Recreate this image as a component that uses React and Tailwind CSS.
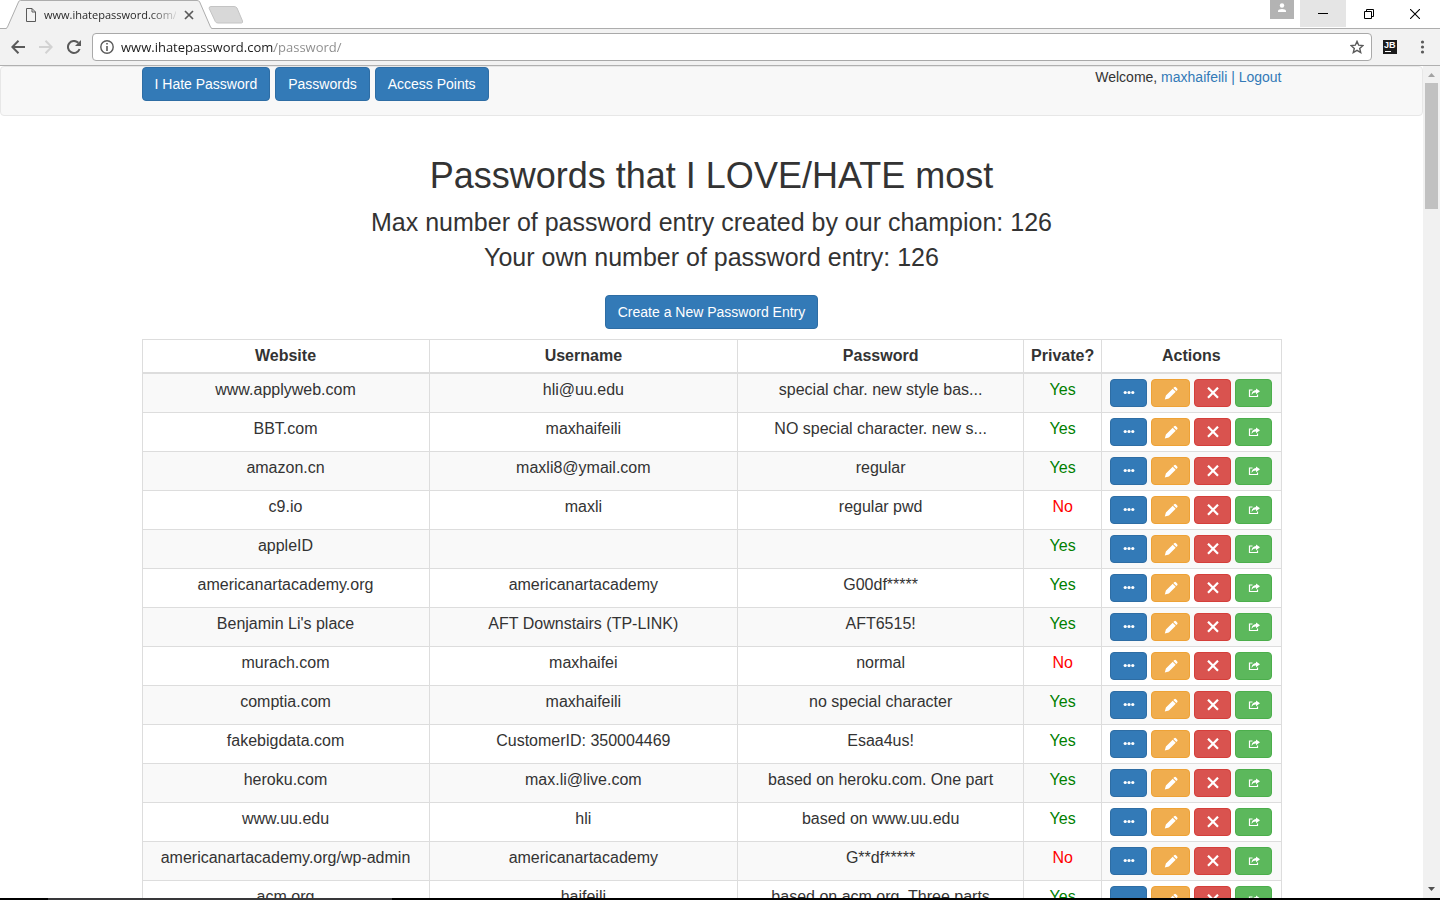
const rows = [
  ["www.applyweb.com", "hli@uu.edu", "special char. new style bas...", true],
  ["BBT.com", "maxhaifeili", "NO special character. new s...", true],
  ["amazon.cn", "maxli8@ymail.com", "regular", true],
  ["c9.io", "maxli", "regular pwd", false],
  ["appleID", "", "", true],
  ["americanartacademy.org", "americanartacademy", "G00df*****", true],
  ["Benjamin Li's place", "AFT Downstairs (TP-LINK)", "AFT6515!", true],
  ["murach.com", "maxhaifei", "normal", false],
  ["comptia.com", "maxhaifeili", "no special character", true],
  ["fakebigdata.com", "CustomerID: 350004469", "Esaa4us!", true],
  ["heroku.com", "max.li@live.com", "based on heroku.com. One part", true],
  ["www.uu.edu", "hli", "based on www.uu.edu", true],
  ["americanartacademy.org/wp-admin", "americanartacademy", "G**df*****", false],
  ["acm.org", "haifeili", "based on acm.org. Three parts", true],
];

function BrowserTab() {
  return (
    <div className="relative flex h-7 w-[206px] items-center pl-5 pr-4">
      <svg className="absolute inset-0 h-[29px] w-full" viewBox="0 0 206 29" aria-hidden="true">
        <path d="M0 29 L1.500 27 L12.500 2 Q13 .5 14.500 .5 H191 Q193 .5 193.700 2 L204.500 27 L206 29 Z" fill="#f2f2f2" />
        <path d="M0 28.500 Q1 28 1.500 27 L12.500 2 Q13 .5 14.500 .5 H191 Q193 .5 193.700 2 L204.500 27 Q205 28 206 28.500" fill="none" stroke="#adadad" />
      </svg>
      <svg className="relative mt-0.5 h-3.5 w-2.5" viewBox="0 0 10 14" fill="none" stroke="#5a5a5a" aria-hidden="true">
        <path d="M.5 .5 H6 L9.500 4 V13.500 H.5 Z M6 .5 V4 H9.500" />
      </svg>
      <span className="relative ml-2 mt-0.5 w-[132px] whitespace-nowrap bg-linear-to-r from-[#222] from-80% to-[#2222] bg-clip-text font-['Open_Sans',sans-serif] text-[11px]/4 text-transparent">
        www.ihatepassword.com/
      </span>
      <button aria-label="Close tab" className="relative ml-2 mt-0.5 shrink-0">
        <svg className="h-2.5 w-2.5" viewBox="0 0 10 10" stroke="#5a5a5a" strokeWidth="1.700" aria-hidden="true">
          <path d="M1 1 L9 9 M9 1 L1 9" />
        </svg>
      </button>
    </div>
  );
}

function TitleBar() {
  return (
    <header className="flex h-[29px] shrink-0 items-start border-b border-[#adadad] bg-white pl-1.5 pr-0.5">
      <BrowserTab />
      <button aria-label="New tab" className="-ml-1 mt-1.5">
        <svg className="h-[18px] w-[36px]" viewBox="0 0 36 18" aria-hidden="true">
          <path d="M3 .5 H26 Q28 .5 29 2 L34.500 15 Q35 17 33.500 17 H10 Q8 17 7.300 15.500 L1.200 2.500 Q.8 .5 3 .5 Z" fill="#d8d8d8" stroke="#c4c4c4" />
        </svg>
      </button>
      <div className="ml-auto flex items-start">
        <button aria-label="Profile" className="mr-1.5 flex h-[19px] w-6 items-center justify-center bg-[#b3b3b3]">
          <svg className="mb-1 h-2.5 w-2.5" viewBox="0 0 10 10" fill="#fff" aria-hidden="true">
            <circle cx="5" cy="2.500" r="2.200" />
            <path d="M1 9 V7.800 Q1.500 6 5 6 Q8.500 6 9 7.800 V9 Z" />
          </svg>
        </button>
        <button aria-label="Minimize" className="flex h-[27px] w-[46px] items-center justify-center bg-[#e5e5e5]">
          <svg className="h-2.5 w-2.5" viewBox="0 0 10 10" aria-hidden="true"><path d="M0 4.500 H10" stroke="#000" /></svg>
        </button>
        <button aria-label="Restore" className="flex h-[27px] w-[46px] items-center justify-center">
          <svg className="h-2.5 w-2.5" viewBox="0 0 10 10" fill="none" stroke="#000" aria-hidden="true">
            <path d="M.5 2.500 H7.500 V9.500 H.5 Z M2.500 2.500 V.5 H9.500 V7.500 H7.500" />
          </svg>
        </button>
        <button aria-label="Close" className="flex h-[27px] w-[46px] items-center justify-center">
          <svg className="h-2.5 w-2.5" viewBox="0 0 10 10" stroke="#000" strokeWidth="1.100" aria-hidden="true">
            <path d="M0 0 L10 10 M10 0 L0 10" />
          </svg>
        </button>
      </div>
    </header>
  );
}

function Toolbar() {
  return (
    <div className="flex h-[37px] shrink-0 items-center border-b border-[#b0b0b0] bg-[#f2f2f2] pl-[11px] pr-[9px]">
      <button aria-label="Back">
        <svg className="h-3.5 w-3.5" viewBox="0 0 14 14" fill="none" stroke="#5a5a5a" strokeWidth="2" aria-hidden="true">
          <path d="M14 7 H1.500 M7.500 .8 L1.300 7 L7.500 13.200" />
        </svg>
      </button>
      <button aria-label="Forward" className="ml-3.5">
        <svg className="h-3.5 w-3.5" viewBox="0 0 14 14" fill="none" stroke="#d2d2d2" strokeWidth="2" aria-hidden="true">
          <path d="M0 7 H12.500 M6.500 .8 L12.700 7 L6.500 13.200" />
        </svg>
      </button>
      <button aria-label="Reload" className="ml-3.5">
        <svg className="h-3.5 w-3.5" viewBox="0 0 14 14" aria-hidden="true">
          <path d="M12.600 9 A6 6 0 1 1 11.300 2.800" fill="none" stroke="#5a5a5a" strokeWidth="2" />
          <path d="M14 0 V6 H8 Z" fill="#5a5a5a" />
        </svg>
      </button>
      <div className="ml-[11px] flex h-7 flex-1 items-center rounded-sm border border-[#a9a9a9] bg-white pl-[7px] pr-[7px]">
        <svg className="h-3.5 w-3.5" viewBox="0 0 14 14" aria-hidden="true">
          <circle cx="7" cy="7" r="6.200" fill="none" stroke="#5a5a5a" strokeWidth="1.400" />
          <path d="M6.200 3 H7.800 V4.600 H6.200 Z M6.200 6 H7.800 V11 H6.200 Z" fill="#5a5a5a" />
        </svg>
        <input
          aria-label="Address"
          defaultValue="www.ihatepassword.com/password/"
          className="ml-[7px] min-w-0 flex-1 bg-linear-to-r from-[#1a1a1a] from-[153px] to-[#8a8a8a] to-[153px] bg-clip-text font-['Open_Sans',sans-serif] text-[13px]/5 text-transparent caret-black outline-none"
        />
        <button aria-label="Bookmark">
          <svg className="h-3.5 w-3.5" viewBox="0 0 14 14" fill="none" stroke="#5a5a5a" strokeWidth="1.400" aria-hidden="true">
            <path d="M7 1.400 L8.700 5.200 L12.900 5.600 L9.700 8.400 L10.700 12.500 L7 10.300 L3.300 12.500 L4.300 8.400 L1.100 5.600 L5.300 5.200 Z" />
          </svg>
        </button>
      </div>
      <button aria-label="JetBrains extension" className="ml-[11px] flex h-3.5 w-3.5 flex-col items-start bg-[#1c1c1c] px-px pt-px text-white">
        <span className="font-['Liberation_Sans',sans-serif] text-[9px]/[8px] font-bold">JB</span>
        <span className="ml-px mt-0.5 h-px w-1.5 bg-white" />
      </button>
      <button aria-label="Menu" className="ml-[18px]">
        <svg className="h-3.5 w-4" viewBox="0 0 16 14" fill="#5a5a5a" aria-hidden="true">
          <circle cx="7.500" cy="2" r="1.600" /><circle cx="7.500" cy="7" r="1.600" /><circle cx="7.500" cy="12" r="1.600" />
        </svg>
      </button>
    </div>
  );
}

const primary = "rounded border border-[#2e6da4] bg-[#337ab7] px-3 py-1.5 text-sm text-white";

function SiteNav() {
  return (
    <nav className="h-[50px] rounded border border-[#e7e7e7] bg-[#f8f8f8]">
      <div className="mx-auto flex max-w-[1140px] items-start justify-between">
        <div className="flex gap-[5px]">
          <a href="#home" className={primary}>I Hate Password</a>
          <a href="#passwords" className={primary}>Passwords</a>
          <a href="#access-points" className={primary}>Access Points</a>
        </div>
        <p className="text-sm">
          Welcome, <a href="#profile" className="text-[#337ab7]">maxhaifeili</a>{" "}
          <span className="text-[#337ab7]">|</span>{" "}
          <a href="#logout" className="text-[#337ab7]">Logout</a>
        </p>
      </div>
    </nav>
  );
}

const action = "flex h-7 items-center justify-center rounded border";

function Actions() {
  return (
    <div className="flex gap-1">
      <button aria-label="Details" className={`${action} w-[37px] border-[#2e6da4] bg-[#337ab7]`}>
        <svg className="h-3 w-3" viewBox="0 0 12 12" fill="#fff" aria-hidden="true">
          <circle cx="2.200" cy="5.500" r="1.600" /><circle cx="6" cy="5.500" r="1.600" /><circle cx="9.800" cy="5.500" r="1.600" />
        </svg>
      </button>
      <button aria-label="Edit" className={`${action} w-[39px] border-[#eea236] bg-[#f0ad4e]`}>
        <svg className="h-3.5 w-3.5" viewBox="0 0 14 14" fill="#fff" aria-hidden="true">
          <path d="M10.200 1.200 Q11.100 .4 12 1.200 L13.200 2.400 Q14 3.300 13.200 4.200 L12.300 5.100 L9.300 2.100 Z M8.700 2.700 L11.700 5.700 L4.900 12.500 L.8 13.600 L1.900 9.500 Z" />
        </svg>
      </button>
      <button aria-label="Delete" className={`${action} w-[37px] border-[#d43f3a] bg-[#d9534f]`}>
        <svg className="h-3 w-3" viewBox="0 0 12 12" stroke="#fff" strokeWidth="2.200" aria-hidden="true">
          <path d="M1 .7 L11 10.700 M11 .7 L1 10.700" />
        </svg>
      </button>
      <button aria-label="Share" className={`${action} w-[37px] border-[#4cae4c] bg-[#5cb85c]`}>
        <svg className="h-3 w-3" viewBox="0 0 12 12" aria-hidden="true">
          <path d="M4.500 3 H1.500 V9.500 H9.500 V7.500" fill="none" stroke="#fff" strokeWidth="1.200" />
          <path d="M8 1.500 L12 4.300 L8 7.200 V5.600 Q5.200 5.400 3.500 8 Q3.800 3.400 8 3.100 Z" fill="#fff" />
        </svg>
      </button>
    </div>
  );
}

const cell = "border border-[#ddd] p-[5px] align-top";

function PasswordTable() {
  return (
    <table className="mt-2.5 w-full table-fixed border-collapse text-center text-base/[22px]">
      <colgroup>
        <col className="w-[25.2%]" />
        <col className="w-[27.1%]" />
        <col className="w-[25.1%]" />
        <col className="w-[78px]" />
        <col className="w-[179px]" />
      </colgroup>
      <thead>
        <tr>
          {["Website", "Username", "Password", "Private?", "Actions"].map((name) => (
            <th key={name} className="border border-b-2 border-[#ddd] p-[5px] font-bold">{name}</th>
          ))}
        </tr>
      </thead>
      <tbody>
        {rows.map(([site, user, password, isPrivate]) => (
          <tr key={site} className="odd:bg-[#f9f9f9]">
            <td className={cell}>{site}</td>
            <td className={cell}>{user}</td>
            <td className={cell}>{password}</td>
            <td className={`${cell} ${isPrivate ? "text-[#008000]" : "text-[#ff0000]"}`}>{isPrivate ? "Yes" : "No"}</td>
            <td className="border border-[#ddd] px-2 py-[5px] align-top"><Actions /></td>
          </tr>
        ))}
      </tbody>
    </table>
  );
}

function Scrollbar() {
  return (
    <div className="flex w-[17px] shrink-0 flex-col items-center bg-[#f1f1f1]" aria-hidden="true">
      <svg className="h-[17px] w-[17px] shrink-0" viewBox="0 0 17 17"><path d="M5 11 H12 L8.500 7 Z" fill="#a3a3a3" /></svg>
      <div className="h-[126px] w-[13px] bg-[#c1c1c1]" />
      <svg className="mt-auto h-[17px] w-[17px] shrink-0" viewBox="0 0 17 17"><path d="M5 6 H12 L8.500 10 Z" fill="#505050" /></svg>
    </div>
  );
}

export default function App() {
  return (
    <div className="flex h-screen flex-col overflow-hidden bg-white font-['Liberation_Sans',Arial,sans-serif] text-[#333]">
      <TitleBar />
      <Toolbar />
      <div className="flex min-h-0 flex-1">
        <div className="min-w-0 flex-1 overflow-hidden">
          <SiteNav />
          <main className="mx-auto flex max-w-[1140px] flex-col items-center pt-10">
            <h1 className="text-4xl/[40px]">Passwords that I LOVE/HATE most</h1>
            <div className="mt-[9px] text-center text-[25px]/[35px]">
              <p>Max number of password entry created by our champion: 126</p>
              <p>Your own number of password entry: 126</p>
            </div>
            <button className={`${primary} mt-5`}>Create a New Password Entry</button>
            <PasswordTable />
          </main>
        </div>
        <Scrollbar />
      </div>
      <div className="flex h-0.5 shrink-0 bg-black">
        <div className="ml-12 w-[344px] bg-[#38383a]" />
      </div>
    </div>
  );
}
